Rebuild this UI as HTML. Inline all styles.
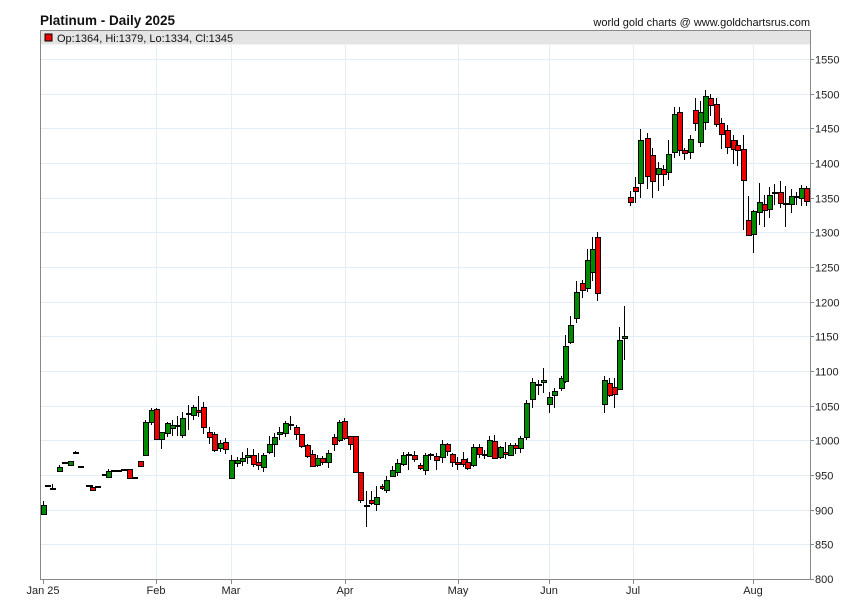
<!DOCTYPE html>
<html><head><meta charset="utf-8"><style>
body{margin:0;background:#fff;width:850px;height:616px;overflow:hidden}
svg{display:block;font-family:"Liberation Sans",Arial,sans-serif}
</style></head><body>
<svg id="c" width="850" height="616" xmlns="http://www.w3.org/2000/svg">
<text x="40" y="25" font-size="13.5" font-weight="bold" fill="#111">Platinum - Daily 2025</text>
<text x="810" y="26" font-size="11" text-anchor="end" fill="#111">world gold charts @ www.goldchartsrus.com</text>
<rect x="40.5" y="30.5" width="770" height="14" fill="#e4e4e4"/>
<g id="grid"></g>
<rect x="45" y="34" width="7" height="7" fill="#e00" stroke="#000" stroke-width="1"/>
<text x="57" y="42" font-size="11" fill="#111">Op:1364, Hi:1379, Lo:1334, Cl:1345</text>
<g id="cand"></g>
<rect x="40.5" y="30.5" width="770" height="549" fill="none" stroke="#888" stroke-width="1"/>
</svg>
<script>
var NS="http://www.w3.org/2000/svg",g=document.getElementById('grid'),cd=document.getElementById('cand');
function el(p,t,a,txt){var e=document.createElementNS(NS,t);for(var k in a)e.setAttribute(k,a[k]);if(txt)e.textContent=txt;p.appendChild(e);return e;}
for(var p=850;p<=1550;p+=50){var y=Math.round(579-(p-800)*0.6933)+0.5;
el(g,'line',{x1:41,x2:810,y1:y,y2:y,stroke:'#e3eef8','stroke-width':1});
el(g,'line',{x1:810,x2:814,y1:y,y2:y,stroke:'#888'});
el(g,'text',{x:815,y:y+4,'font-size':11,fill:'#222'},String(p));}
el(g,'line',{x1:810,x2:814,y1:579.5,y2:579.5,stroke:'#888'});
el(g,'text',{x:815,y:583,'font-size':11,fill:'#222'},'800');
var m=[[43,'Jan 25'],[156,'Feb'],[231,'Mar'],[345,'Apr'],[458,'May'],[549,'Jun'],[633,'Jul'],[753,'Aug']];
m.forEach(function(a){var x=a[0]+0.5;if(a[0]>45)el(g,'line',{x1:x,x2:x,y1:45,y2:579,stroke:'#e3eef8'});
el(g,'line',{x1:x,x2:x,y1:580,y2:584,stroke:'#888'});
el(g,'text',{x:a[0],y:594,'font-size':11,fill:'#222','text-anchor':'middle'},a[1]);});
var D=[
[43,'g',505,514,501,514],[47,'f',486,486,486,486],[52,'f',489,489,484,489],[59,'g',467,471,465,471],[64,'f',463,463,463,463],[70,'g',461,465,461,465],[75,'f',453,453,451,453],[80,'f',467,467,467,467],
[88,'f',486,486,486,486],[92,'r',487,490,485,490],[97,'f',487,487,487,487],[104,'f',475,475,475,475],[108,'g',471,477,469,478],[113,'f',471,471,471,471],[118,'f',471,471,471,471],[123,'f',470,470,470,470],[129,'r',469,478,469,478],[134,'f',478,478,478,478],
[140,'r',461,466,461,466],[145,'g',422,455,420,455],[151,'g',410,422,408,425],[156,'r',409,439,408,439],[161,'g',432,439,432,449],[167,'g',423,433,422,437],[172,'g',425,428,420,436],[177,'f',426,426,416,436],[182,'g',418,435,412,438],[188,'f',414,414,405,430],[193,'g',407,415,405,420],[198,'r',410,412,396,417],[203,'r',407,427,402,434],[209,'r',432,437,427,444],[214,'r',434,450,432,452],[220,'g',443,448,440,452],[225,'r',442,449,438,454],
[231,'g',460,478,455,478],[237,'g',460,463,457,467],[242,'g',458,461,452,466],[247,'g',455,457,448,464],[253,'r',455,464,449,467],[258,'r',462,465,453,470],[263,'g',455,467,453,472],[269,'g',444,452,436,454],[274,'g',437,444,433,457],[279,'g',432,434,427,440],[285,'g',423,433,421,437],[290,'f',425,425,416,430],[296,'r',427,434,425,440],[301,'r',434,446,434,448],[307,'r',445,456,444,458],[312,'r',454,466,450,467],[317,'g',458,465,455,467],[322,'r',458,462,456,465],[328,'g',453,462,450,468],[334,'r',437,444,434,451],[339,'g',422,440,420,442],[344,'r',421,438,418,440],[350,'r',436,444,436,450],[355,'r',436,472,436,472],[360,'r',472,500,472,503],[366,'f',506,506,491,527],[371,'r',500,503,491,505],[376,'g',497,504,486,511],[382,'r',486,488,484,490],[386,'g',480,490,476,493],[392,'g',470,476,466,477],[397,'g',463,472,459,476],[403,'g',455,464,452,466],[408,'f',455,455,452,470],[414,'r',455,459,451,462],
[420,'r',465,468,463,470],[425,'g',455,470,453,475],[430,'f',455,455,453,460],[436,'r',456,460,453,470],[442,'g',444,457,440,463],[447,'r',444,451,443,456],[452,'r',454,462,453,467],[457,'r',462,464,457,470],[463,'r',459,464,452,467],[467,'r',462,468,458,470],[473,'g',447,465,444,467],[479,'r',447,454,444,458],[484,'f',455,455,450,459],[489,'g',440,456,436,457],[494,'r',441,458,435,459],[500,'g',447,457,446,459],[505,'r',452,454,442,459],[510,'g',445,455,443,456],[515,'r',445,448,443,454],[520,'g',438,448,436,453],[526,'g',403,437,400,440],[532,'g',382,399,378,408],[538,'f',385,385,380,395],[543,'g',380,382,368,393],[549,'g',397,404,392,413],[554,'g',391,395,388,408],[561,'g',378,388,376,391],[565,'g',346,381,335,383],[570,'g',325,342,316,344],[576,'g',292,318,281,323],[582,'r',283,290,280,298],[587,'g',260,288,249,292],[592,'g',249,272,237,281],[597,'r',237,293,232,301],
[604,'g',380,404,376,413],[609,'r',383,395,378,397],[614,'r',387,394,378,408],[619,'g',340,389,327,389],[624,'g',336,338,306,360],
[630,'r',197,202,191,206],[635,'r',187,191,177,203],[640,'g',140,183,129,198],[647,'r',138,176,133,189],[652,'r',155,181,148,198],[658,'g',168,174,162,191],[663,'r',169,174,165,186],[668,'g',154,172,140,180],[674,'g',114,152,107,158],[679,'r',112,150,107,156],[684,'r',150,153,148,160],[690,'g',139,152,135,159],[695,'r',110,123,98,131],[700,'g',112,142,101,147],[705,'g',96,122,90,130],[710,'r',98,105,94,116],[716,'r',104,124,98,127],[721,'r',123,134,118,149],[727,'r',130,147,125,154],[733,'r',140,149,135,164],[737,'r',145,150,140,166],[743,'r',149,180,135,230],[748,'r',220,235,196,236],[753,'g',211,234,210,253],[759,'g',202,212,183,225],[764,'r',204,210,195,227],[769,'g',195,209,187,218],[774,'f',193,193,184,205],[780,'r',192,203,181,208],[785,'f',204,204,186,227],[791,'g',196,204,189,213],[796,'f',197,197,192,205],[801,'g',188,198,185,206],[806,'r',188,201,186,206]];
D.forEach(function(d){var x=d[0];
el(cd,'line',{x1:x+0.5,x2:x+0.5,y1:d[4],y2:d[5],stroke:'#000','stroke-width':1});
if(d[1]=='f'){el(cd,'rect',{x:x-2,y:d[2]-1,width:6,height:2,fill:'#000'});}
else{el(cd,'rect',{x:x-1.5,y:d[2]+0.5,width:5,height:Math.max(2,d[3]-d[2]),fill:d[1]=='g'?'#008a00':'#ee0000',stroke:'#000','stroke-width':1});}});
</script>
</body></html>
